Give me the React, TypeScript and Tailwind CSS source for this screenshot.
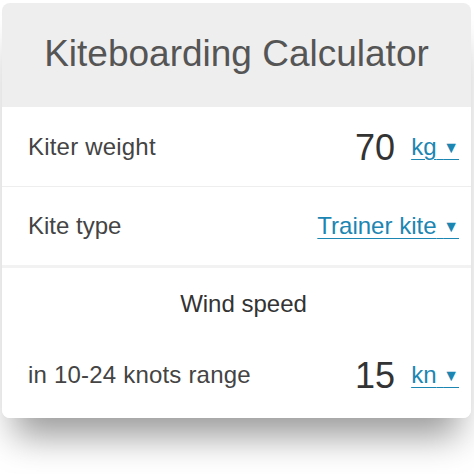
function Select({ label }: { label: string }) {
  return (
    <span className="cursor-pointer text-[24px] text-[#1c86b3] underline decoration-1 underline-offset-[4px]">
      {label}
      {'\u00a0'}
      <span className="align-[2px] text-[16px]">▼</span>
    </span>
  )
}

function App() {
  return (
    <div className="h-[474px] w-[474px] bg-white px-[2px] pt-[3px] font-['Liberation_Sans',Arial,sans-serif]">
      <div className="w-[469px] rounded-[8px] shadow-[0_30px_34px_-12px_rgba(0,0,0,0.4)]">
        <header className="flex h-[104px] items-center justify-center rounded-t-[8px] bg-[#eeeeee] pb-[2px]">
          <h1 className="text-[37px] text-[#555555]">Kiteboarding Calculator</h1>
        </header>

        <div className="flex h-[80px] items-center justify-between border-b border-[#eeeeee] pl-[26px] pr-[12px]">
          <span className="text-[24px] text-[#444444] tracking-[0.2px]">Kiter weight</span>
          <div className="flex items-center gap-[16px]">
            <span className="pt-[3px] text-[36px] text-[#333333]">70</span>
            <Select label="kg" />
          </div>
        </div>

        <div className="flex h-[81px] items-center justify-between border-b-[3px] border-[#f2f2f2] pl-[26px] pr-[12px]">
          <span className="text-[24px] text-[#444444]">Kite type</span>
          <Select label="Trainer kite" />
        </div>

        <div className="flex h-[150px] flex-col rounded-b-[8px] bg-white pl-[26px] pr-[12px]">
          <div className="pt-[18px] text-center text-[24px] text-[#333333]">Wind speed</div>
          <div className="mt-[24px] flex items-center justify-between">
            <span className="text-[24px] text-[#444444] tracking-[0.2px]">in 10-24 knots range</span>
            <div className="flex items-center gap-[16px]">
              <span className="pt-[3px] text-[36px] text-[#333333]">15</span>
              <Select label="kn" />
            </div>
          </div>
        </div>
      </div>
    </div>
  )
}

export default App
